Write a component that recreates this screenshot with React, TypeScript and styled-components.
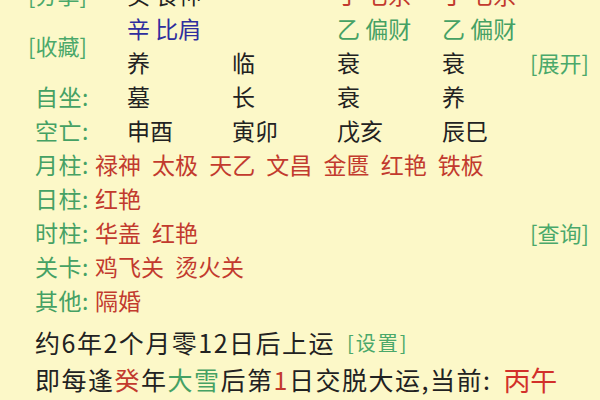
import styled, { createGlobalStyle } from "styled-components";

const GlobalStyle = createGlobalStyle`
    html, body {
        margin: 0;
        padding: 0;
        background: #fcf8c8;
    }
    body {
        font-family: "Noto Sans CJK SC", "Noto Sans", sans-serif;
    }
`;

const Page = styled.div`
    width: 600px;
    height: 400px;
    overflow: hidden;
    background: #fcf8c8;
    color: #222;
`;

const Table = styled.div`
    display: grid;
    grid-template-columns: 99px 105px 105px 105px 88px 1fr;
    grid-auto-rows: 34px;
    margin: -23px 0 0 28px;
    font-size: 23px;
    align-items: center;
`;

const Label = styled.div<{ $row: number }>`
    grid-row: ${(p) => p.$row};
    grid-column: 1;
    padding-left: 7px;
    color: #45a164;
    letter-spacing: 0.5px;
    white-space: nowrap;
`;

const Link = styled.div<{ $row: string; $col: string }>`
    grid-row: ${(p) => p.$row};
    grid-column: ${(p) => p.$col};
    color: #4aa86a;
    font-size: 22px;
    white-space: nowrap;
`;

const Cell = styled.div<{ $row: number; $col: number; $color?: string }>`
    grid-row: ${(p) => p.$row};
    grid-column: ${(p) => p.$col};
    color: ${(p) => p.$color || "#222"};
    white-space: nowrap;
`;

const Line = styled.div<{ $row: number }>`
    grid-row: ${(p) => p.$row};
    grid-column: 1 / 6;
    display: flex;
    align-items: center;
    white-space: nowrap;
    padding-left: 7px;
`;

const Tags = styled.span`
    color: #c23a2e;
    word-spacing: 6px;
    margin-left: 6px;
`;

const LineLabel = styled.span`
    color: #45a164;
    letter-spacing: 0.5px;
`;

const Footer = styled.div`
    margin: 8px 0 0 35px;
    font-size: 25px;
    letter-spacing: 1.5px;
`;

const FootLine = styled.div<{ $h: number }>`
    height: ${(p) => p.$h}px;
    display: flex;
    align-items: center;
    white-space: nowrap;
`;

const Small = styled.span`
    color: #4aa86a;
    font-size: 20px;
    letter-spacing: 2px;
    margin-left: 12px;
`;

const Hl = styled.span<{ $color: string }>`
    color: ${(p) => p.$color};
`;

const Current = styled.span`
    color: #d2302a;
    font-size: 27px;
    letter-spacing: 0;
    margin-left: 12px;
`;

const RED = "#c23a2e";
const GREEN = "#45a164";
const BLUE = "#2e2e9e";

export default function App() {
    return (
        <Page>
            <GlobalStyle />
            <Table>
                <Link $row="1" $col="1">[分享]</Link>
                <Cell $row={1} $col={2}>癸 食神</Cell>
                <Cell $row={1} $col={4} $color={RED}>丁 七杀</Cell>
                <Cell $row={1} $col={5} $color={RED}>丁 七杀</Cell>

                <Link $row="2 / 4" $col="1">[收藏]</Link>
                <Cell $row={2} $col={2} $color={BLUE}>辛 比肩</Cell>
                <Cell $row={2} $col={4} $color={GREEN}>乙 偏财</Cell>
                <Cell $row={2} $col={5} $color={GREEN}>乙 偏财</Cell>

                <Cell $row={3} $col={2}>养</Cell>
                <Cell $row={3} $col={3}>临</Cell>
                <Cell $row={3} $col={4}>衰</Cell>
                <Cell $row={3} $col={5}>衰</Cell>
                <Link $row="3" $col="6">[展开]</Link>

                <Label $row={4}>自坐:</Label>
                <Cell $row={4} $col={2}>墓</Cell>
                <Cell $row={4} $col={3}>长</Cell>
                <Cell $row={4} $col={4}>衰</Cell>
                <Cell $row={4} $col={5}>养</Cell>

                <Label $row={5}>空亡:</Label>
                <Cell $row={5} $col={2}>申酉</Cell>
                <Cell $row={5} $col={3}>寅卯</Cell>
                <Cell $row={5} $col={4}>戊亥</Cell>
                <Cell $row={5} $col={5}>辰巳</Cell>

                <Line $row={6}>
                    <LineLabel>月柱:</LineLabel>
                    <Tags>禄神 太极 天乙 文昌 金匮 红艳 铁板</Tags>
                </Line>
                <Line $row={7}>
                    <LineLabel>日柱:</LineLabel>
                    <Tags>红艳</Tags>
                </Line>
                <Line $row={8}>
                    <LineLabel>时柱:</LineLabel>
                    <Tags>华盖 红艳</Tags>
                </Line>
                <Link $row="8" $col="6">[查询]</Link>
                <Line $row={9}>
                    <LineLabel>关卡:</LineLabel>
                    <Tags>鸡飞关 烫火关</Tags>
                </Line>
                <Line $row={10}>
                    <LineLabel>其他:</LineLabel>
                    <Tags>隔婚</Tags>
                </Line>
            </Table>
            <Footer>
                <FootLine $h={34}>
                    约6年2个月零12日后上运
                    <Small>[设置]</Small>
                </FootLine>
                <FootLine $h={40}>
                    即每逢<Hl $color={RED}>癸</Hl>年<Hl $color={GREEN}>大雪</Hl>后第<Hl $color={RED}>1</Hl>日交脱大运,当前:
                    <Current>丙午</Current>
                </FootLine>
            </Footer>
        </Page>
    );
}
